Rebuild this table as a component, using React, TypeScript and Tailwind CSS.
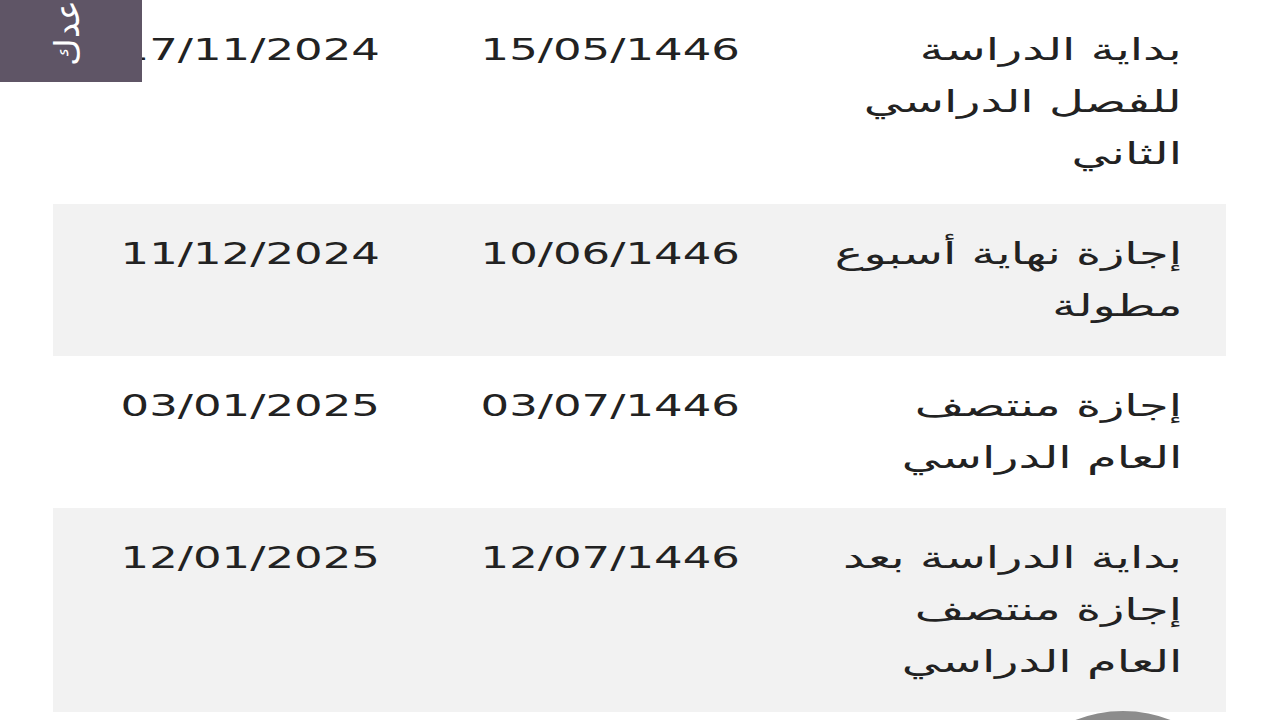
const rows = [
  { name: ['بداية الدراسة', 'للفصل الدراسي', 'الثاني'], hijri: '15/05/1446', greg: '17/11/2024' },
  { name: ['إجازة نهاية أسبوع', 'مطولة'], hijri: '10/06/1446', greg: '11/12/2024' },
  { name: ['إجازة منتصف', 'العام الدراسي'], hijri: '03/07/1446', greg: '03/01/2025' },
  { name: ['بداية الدراسة بعد', 'إجازة منتصف', 'العام الدراسي'], hijri: '12/07/1446', greg: '12/01/2025' },
];

export default function App() {
  return (
    <div
      className="relative h-[720px] w-[1280px] overflow-hidden bg-white"
      style={{ fontFamily: '"DejaVu Sans", "Noto Sans", sans-serif' }}
    >
      <div dir="rtl" className="pl-[53px] pr-[54px]">
        {rows.map((r, i) => (
          <div
            key={i}
            className={`grid grid-cols-[442px_360px_1fr] text-[30px] leading-[52px] text-[#222] ${
              i % 2 === 1 ? 'bg-[#f2f2f2]' : 'bg-white'
            }`}
          >
            <div className="py-6 pr-[44px]">
              {r.name.map((l, j) => (
                <div key={j}>
                  <span className="inline-block origin-right scale-x-[1.6] whitespace-nowrap">{l}</span>
                </div>
              ))}
            </div>
            <div className="py-6 pr-[44px]">
              <span className="inline-block origin-right scale-x-[1.5]">{r.hijri}</span>
            </div>
            <div className="py-6 pr-[44px]">
              <span className="inline-block origin-right scale-x-[1.5]">{r.greg}</span>
            </div>
          </div>
        ))}
      </div>

      {/* feedback tab */}
      <div className="absolute left-0 top-0 h-[82px] w-[142px] overflow-hidden bg-[#5f5566]">
        <div className="absolute left-[67px] top-[66px] h-0 w-0 origin-top-left -rotate-90">
          <span dir="rtl" className="absolute left-0 top-0 -translate-y-1/2 whitespace-nowrap text-[34px] leading-none text-white">
            هل ساعدك
          </span>
        </div>
      </div>

      {/* scroll-to-top button peeking */}
      <div className="absolute left-[993px] top-[711px] h-[260px] w-[260px] rounded-full bg-[#8c8c8c]" />
    </div>
  );
}
